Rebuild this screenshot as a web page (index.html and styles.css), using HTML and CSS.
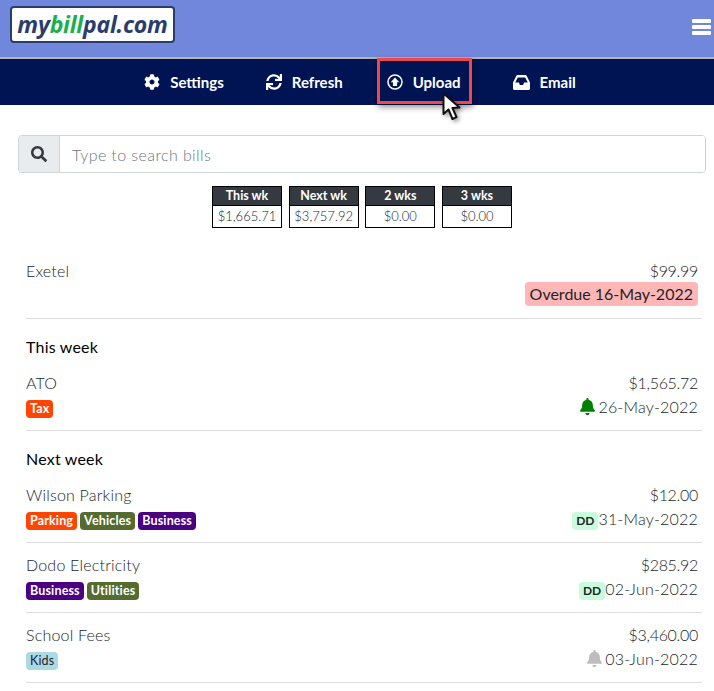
FILE: index.html
```html
<!DOCTYPE html>
<html lang="en">
<head>
    <meta charset="UTF-8">
    <meta name="viewport" content="width=device-width, initial-scale=1.0">
    <title>mybillpal.com</title>
    <link rel="stylesheet" href="styles.css">
</head>
<body>
    <header class="topbar">
        <a class="logo"><span>my</span><span class="logo-bill">bill</span><span>pal.com</span></a>
        <svg class="burger" viewBox="0 0 19 16"><rect y="0" width="19" height="4" rx="1"/><rect y="6" width="19" height="4" rx="1"/><rect y="12" width="19" height="4" rx="1"/></svg>
    </header>
    <nav class="toolbar">
        <a class="tool tool-settings">
            <svg class="tool-icon" viewBox="0 0 512 512"><path d="M487.4 315.7l-42.6-24.6c4.3-23.2 4.3-47 0-70.2l42.6-24.6c4.9-2.8 7.1-8.6 5.5-14-11.1-35.6-30-67.8-54.7-94.6-3.8-4.1-10-5.1-14.8-2.3L380.8 110c-17.9-15.4-38.5-27.3-60.8-35.1V25.8c0-5.6-3.9-10.5-9.4-11.7-36.7-8.2-74.3-7.8-109.2 0-5.5 1.2-9.4 6.1-9.4 11.7V75c-22.2 7.9-42.8 19.8-60.8 35.1L88.7 85.5c-4.9-2.8-11-1.9-14.8 2.3-24.7 26.7-43.6 58.9-54.7 94.6-1.7 5.4.6 11.2 5.5 14L67.3 221c-4.3 23.2-4.3 47 0 70.2l-42.6 24.6c-4.9 2.8-7.1 8.6-5.5 14 11.1 35.6 30 67.8 54.7 94.6 3.8 4.1 10 5.1 14.8 2.3l42.6-24.6c17.9 15.4 38.5 27.3 60.8 35.1v49.2c0 5.6 3.9 10.5 9.4 11.7 36.7 8.2 74.3 7.8 109.2 0 5.5-1.2 9.4-6.1 9.4-11.7v-49.2c22.2-7.9 42.8-19.8 60.8-35.1l42.6 24.6c4.9 2.8 11 1.9 14.8-2.3 24.7-26.7 43.6-58.9 54.7-94.6 1.5-5.5-.7-11.3-5.6-14.1zM256 336c-44.1 0-80-35.9-80-80s35.9-80 80-80 80 35.9 80 80-35.9 80-80 80z"/></svg>
            Settings
        </a>
        <a class="tool tool-refresh">
            <svg class="tool-icon" viewBox="0 0 512 512"><path d="M440.65 12.57l4 82.77A247.16 247.16 0 0 0 255.83 8C134.73 8 33.91 94.92 12.29 209.82A12 12 0 0 0 24.09 224h49.05a12 12 0 0 0 11.67-9.26 175.91 175.91 0 0 1 317-56.94l-101.46-4.86a12 12 0 0 0-12.57 12v47.41a12 12 0 0 0 12 12H500a12 12 0 0 0 12-12V12a12 12 0 0 0-12-12h-47.37a12 12 0 0 0-11.98 12.57zM255.83 432a175.61 175.61 0 0 1-146-77.8l101.8 4.87a12 12 0 0 0 12.57-12v-47.4a12 12 0 0 0-12-12H12a12 12 0 0 0-12 12V500a12 12 0 0 0 12 12h47.35a12 12 0 0 0 12-12.6l-4.15-82.57A247.17 247.17 0 0 0 255.83 504c121.11 0 221.93-86.92 243.55-201.82a12 12 0 0 0-11.8-14.18h-49.05a12 12 0 0 0-11.67 9.26A175.86 175.86 0 0 1 255.83 432z"/></svg>
            Refresh
        </a>
        <a class="tool tool-upload">
            <svg class="tool-icon" viewBox="0 0 512 512"><circle class="ring" cx="256" cy="256" r="224"/><path d="M256 112 L392 262 H322 V384 H190 V262 H120 Z"/></svg>
            Upload
            <svg class="cursor" viewBox="0 0 20 30"><path d="M1.5 1.5 L1.5 22 L6.5 17.5 L10.5 27 L14.5 25.2 L10.5 16 L17.5 15.5 Z"/></svg>
        </a>
        <a class="tool tool-email">
            <svg class="tool-icon tool-icon-wide" viewBox="0 64 576 384" preserveAspectRatio="none"><path d="M567.938 243.908L462.25 85.374A48.003 48.003 0 0 0 422.311 64H153.689a48 48 0 0 0-39.938 21.374L8.062 243.908A47.994 47.994 0 0 0 0 270.533V400c0 26.51 21.49 48 48 48h480c26.51 0 48-21.49 48-48V270.533a47.994 47.994 0 0 0-8.062-26.625zM162.252 128h251.497l85.333 128H376l-32 64H232l-32-64H76.918l85.334-128z"/></svg>
            Email
        </a>
    </nav>

    <main class="content">
        <div class="search">
            <span class="search-addon">
                <svg viewBox="0 0 512 512"><path d="M505 442.7L405.3 343c-4.5-4.5-10.6-7-17-7H372c27.6-35.3 44-79.7 44-128C416 93.1 322.9 0 208 0S0 93.1 0 208s93.1 208 208 208c48.3 0 92.7-16.4 128-44v16.3c0 6.4 2.5 12.5 7 17l99.7 99.7c9.4 9.4 24.6 9.4 33.9 0l28.3-28.3c9.4-9.4 9.4-24.6.1-34zM208 336c-70.7 0-128-57.2-128-128 0-70.7 57.2-128 128-128 70.7 0 128 57.2 128 128 0 70.7-57.2 128-128 128z"/></svg>
            </span>
            <input class="search-input" type="text" placeholder="Type to search bills">
        </div>

        <div class="totals">
            <div class="total"><div class="total-head">This wk</div><div class="total-value">$1,665.71</div></div>
            <div class="total"><div class="total-head">Next wk</div><div class="total-value">$3,757.92</div></div>
            <div class="total"><div class="total-head">2 wks</div><div class="total-value">$0.00</div></div>
            <div class="total"><div class="total-head">3 wks</div><div class="total-value">$0.00</div></div>
        </div>

        <section class="bills">
            <div class="bill">
                <div class="bill-line"><span>Exetel</span><span class="amount">$99.99</span></div>
                <div class="bill-line"><span class="tags"></span><span class="overdue">Overdue 16-May-2022</span></div>
            </div>

            <h2 class="group-title">This week</h2>
            <div class="bill">
                <div class="bill-line"><span>ATO</span><span class="amount">$1,565.72</span></div>
                <div class="bill-line">
                    <span class="tags"><span class="tag tag-orange">Tax</span></span>
                    <span class="due">
                        <svg class="bell bell-green" viewBox="0 0 448 512"><path d="M224 512c35.32 0 63.97-28.65 63.97-64H160.03c0 35.35 28.65 64 63.97 64zm215.39-149.71c-19.32-20.76-55.47-51.99-55.47-154.29 0-77.7-54.48-139.9-127.94-155.16V32c0-17.67-14.32-32-31.98-32s-31.98 14.33-31.98 32v20.84C118.56 68.1 64.08 130.3 64.08 208c0 102.3-36.15 133.53-55.47 154.29-6 6.45-8.66 14.16-8.61 21.71.11 16.4 12.98 32 32.1 32h383.8c19.12 0 32-15.6 32.1-32 .05-7.55-2.61-15.27-8.61-21.71z"/></svg>
                        26-May-2022
                    </span>
                </div>
            </div>

            <h2 class="group-title">Next week</h2>
            <div class="bill">
                <div class="bill-line"><span>Wilson Parking</span><span class="amount">$12.00</span></div>
                <div class="bill-line">
                    <span class="tags"><span class="tag tag-orange">Parking</span><span class="tag tag-olive">Vehicles</span><span class="tag tag-purple">Business</span></span>
                    <span class="due"><span class="dd">DD</span>31-May-2022</span>
                </div>
            </div>
            <div class="bill">
                <div class="bill-line"><span>Dodo Electricity</span><span class="amount">$285.92</span></div>
                <div class="bill-line">
                    <span class="tags"><span class="tag tag-purple">Business</span><span class="tag tag-olive">Utilities</span></span>
                    <span class="due"><span class="dd">DD</span>02-Jun-2022</span>
                </div>
            </div>
            <div class="bill">
                <div class="bill-line"><span>School Fees</span><span class="amount">$3,460.00</span></div>
                <div class="bill-line">
                    <span class="tags"><span class="tag tag-blue">Kids</span></span>
                    <span class="due">
                        <svg class="bell bell-grey" viewBox="0 0 448 512"><path d="M224 512c35.32 0 63.97-28.65 63.97-64H160.03c0 35.35 28.65 64 63.97 64zm215.39-149.71c-19.32-20.76-55.47-51.99-55.47-154.29 0-77.7-54.48-139.9-127.94-155.16V32c0-17.67-14.32-32-31.98-32s-31.98 14.33-31.98 32v20.84C118.56 68.1 64.08 130.3 64.08 208c0 102.3-36.15 133.53-55.47 154.29-6 6.45-8.66 14.16-8.61 21.71.11 16.4 12.98 32 32.1 32h383.8c19.12 0 32-15.6 32.1-32 .05-7.55-2.61-15.27-8.61-21.71z"/></svg>
                        03-Jun-2022
                    </span>
                </div>
            </div>
        </section>
    </main>
</body>
</html>
```
FILE: styles.css
```css
body {
    margin: 0;
    font-family: "Lato", "Open Sans", sans-serif;
    font-size: 16px;
    font-weight: 300;
    letter-spacing: 0.2px;
    color: #212529;
    background: #fff;
}

.topbar {
    box-sizing: border-box;
    height: 59px;
    background: #7087db;
    border-bottom: 2px solid #b5b5b0;
    display: flex;
    align-items: flex-start;
    justify-content: space-between;
    padding: 6px 3px 0 10px;
}

.logo {
    box-sizing: border-box;
    width: 165px;
    height: 37px;
    background: #fff;
    border: 2px solid #2a3c6b;
    border-radius: 4px;
    font-family: "Open Sans", sans-serif;
    font-weight: 700;
    font-style: italic;
    font-size: 23px;
    letter-spacing: -0.2px;
    line-height: 32px;
    text-align: center;
    color: #2a3c6b;
    white-space: nowrap;
}

.logo-bill {
    color: #17b04b;
}

.burger {
    width: 19px;
    height: 16px;
    margin-top: 13px;
    fill: #fff;
}

.toolbar {
    height: 46px;
    background: #001453;
    display: flex;
    justify-content: center;
    align-items: center;
    padding-left: 6px;
}

.tool {
    position: relative;
    display: flex;
    align-items: center;
    gap: 10px;
    color: #fff;
    font-weight: 700;
    font-size: 15px;
    letter-spacing: 0;
}

.tool-refresh { margin-left: 42px; }
.tool-upload { margin-left: 44px; }
.tool-email { margin-left: 52px; }

.tool-icon {
    width: 16px;
    height: 16px;
    fill: #fff;
}

.tool-icon .ring {
    fill: none;
    stroke: #fff;
    stroke-width: 48;
}

.tool-icon-wide {
    width: 17px;
    height: 15px;
}

/* red box round the upload button, drawn for the screenshot */
.tool-upload::before {
    content: "";
    position: absolute;
    left: -10px;
    right: -11px;
    top: -15px;
    height: 40px;
    border: 3px solid #f0474f;
    box-shadow: 1px 3px 6px rgba(0, 0, 0, 0.45);
}

.cursor {
    position: absolute;
    left: 55px;
    top: 19px;
    width: 20px;
    height: 30px;
    fill: #fff;
    stroke: #111;
    stroke-width: 2;
    stroke-linejoin: round;
    filter: drop-shadow(2px 2px 2px rgba(0, 0, 0, 0.4));
}

.content {
    padding: 30px 8px 0 18px;
}

.search {
    display: flex;
    height: 38px;
    box-sizing: border-box;
    border: 1px solid #ced4da;
    border-radius: 4px;
    overflow: hidden;
}

.search-addon {
    width: 40px;
    background: #e9ecef;
    border-right: 1px solid #ced4da;
    display: flex;
    align-items: center;
    justify-content: center;
}

.search-addon svg {
    width: 16px;
    height: 16px;
    fill: #343a40;
}

.search-input {
    flex: 1;
    border: 0;
    outline: 0;
    padding: 0 12px;
    font-family: inherit;
    font-size: 16px;
    font-weight: 300;
    letter-spacing: 0.4px;
}

.search-input::placeholder {
    color: #6c757d;
}

.totals {
    display: flex;
    justify-content: center;
    gap: 6.67px;
    margin-top: 13px;
}

.total {
    box-sizing: border-box;
    width: 70px;
    border: 1px solid #000;
    text-align: center;
    font-size: 13px;
    letter-spacing: 0;
}

.total-head {
    height: 18px;
    line-height: 18px;
    background: #343a40;
    color: #fff;
    font-weight: 700;
    font-size: 12.5px;
    border-bottom: 1px solid #000;
}

.total-value {
    height: 21px;
    line-height: 21px;
}

.bills {
    margin: 21px 4px 0 8px;
}

.bill {
    height: 70px;
    box-sizing: border-box;
    padding: 9px 4px 0 0;
    border-bottom: 1px solid #dedede;
}

.bill-line {
    display: flex;
    justify-content: space-between;
    align-items: center;
    height: 24px;
}

.amount {
    letter-spacing: -0.3px;
}

.group-title {
    box-sizing: border-box;
    margin: 0;
    height: 42px;
    padding-top: 18px;
    font-size: 16px;
    font-weight: 400;
    color: #000;
    line-height: 20px;
}

.tags {
    display: flex;
    gap: 3px;
    margin-top: 6px;
}

.tag {
    height: 18px;
    line-height: 18px;
    padding: 0 4px;
    border-radius: 4px;
    color: #fff;
    font-size: 12.5px;
    font-weight: 700;
    letter-spacing: 0.15px;
}

.tag-orange { background: #ff4500; }
.tag-olive { background: #556b2f; }
.tag-purple { background: #4b0082; }
.tag-blue { background: #add8e6; color: #212529; font-weight: 400; }

.overdue {
    background: #ffb6b6;
    padding: 0 5px;
    height: 24px;
    line-height: 24px;
    border-radius: 4px;
    font-weight: 400;
    letter-spacing: 0;
}

.due {
    display: flex;
    align-items: center;
}

.bell {
    width: 15px;
    height: 17px;
    margin-right: 3px;
}

.bell-green { fill: #008000; }
.bell-grey { fill: #bdbdbd; }

.dd {
    background: #c8fcdc;
    font-size: 12px;
    font-weight: 700;
    height: 18px;
    line-height: 18px;
    padding: 0 4px;
    margin-top: 6px;
    border-radius: 4px;
    letter-spacing: 0;
}
```
